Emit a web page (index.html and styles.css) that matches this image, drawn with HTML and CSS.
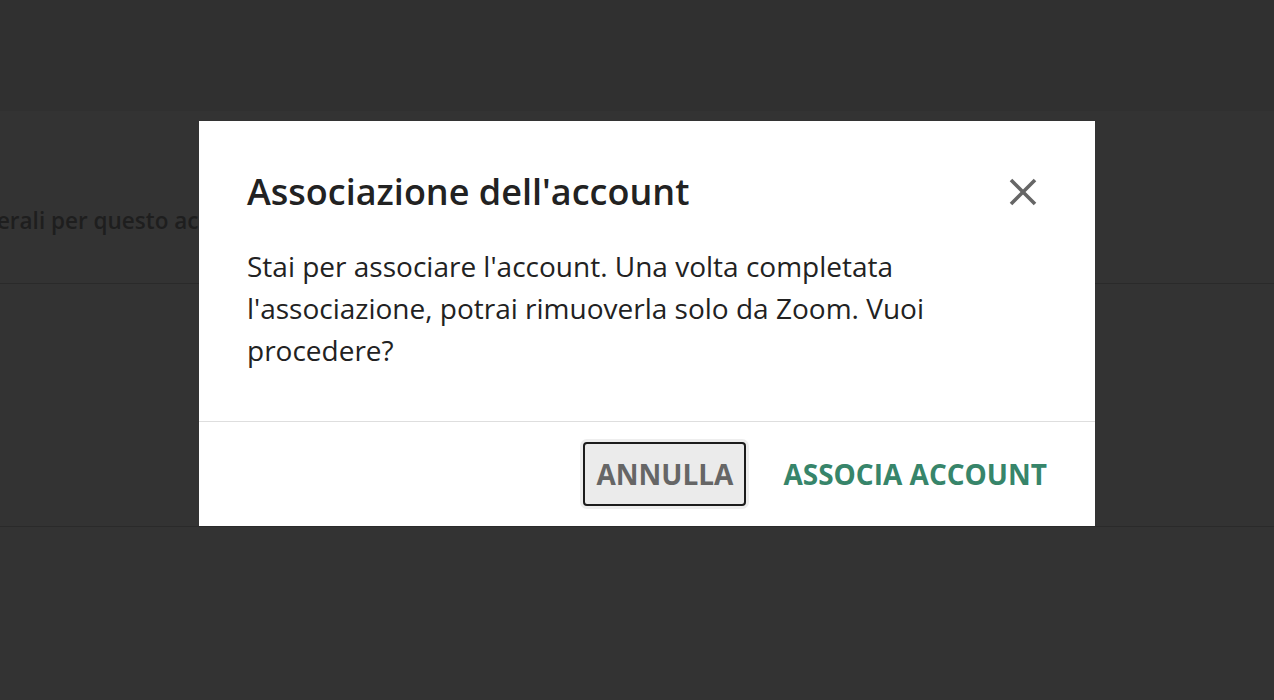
FILE: index.html
```html
<!DOCTYPE html>
<html lang="it">
<head>
<meta charset="utf-8">
<title>Associazione dell'account</title>
<link rel="stylesheet" href="styles.css">
</head>
<body>
<div class="page">
  <header class="topbar"></header>
  <section class="settings-head">
    <h2 class="settings-title">Impostazioni generali per questo account</h2>
  </section>
  <section class="settings-body"></section>
  <section class="settings-rest"></section>
</div>

<div class="overlay">
  <div class="modal" role="dialog" aria-labelledby="modal-title">
    <div class="modal-header">
      <h1 class="modal-title" id="modal-title">Associazione dell'account</h1>
      <button class="close-btn" aria-label="Chiudi">
        <svg width="28" height="28" viewBox="0 0 28 28">
          <path d="M2 2 L26 26 M26 2 L2 26" stroke="#666" stroke-width="3.6" stroke-linecap="butt" fill="none"/>
        </svg>
      </button>
    </div>
    <div class="modal-body">
      <p>Stai per associare l'account. Una volta completata l'associazione, potrai rimuoverla solo da Zoom. Vuoi procedere?</p>
    </div>
    <div class="modal-footer">
      <button class="btn btn-cancel">ANNULLA</button>
      <button class="btn btn-primary">ASSOCIA ACCOUNT</button>
    </div>
  </div>
</div>
</body>
</html>
```

FILE: styles.css
```css
* { box-sizing: border-box; }

html, body {
  margin: 0;
  padding: 0;
}

body {
  width: 1274px;
  height: 700px;
  overflow: hidden;
  background: #333333;
  font-family: "Open Sans", "Liberation Sans", sans-serif;
  position: relative;
}

.page {
  display: flex;
  flex-direction: column;
}

.topbar {
  height: 111px;
  background: #303030;
}

.settings-head {
  height: 173px;
  display: flex;
  align-items: center;
  border-bottom: 1px solid #2a2a2a;
  overflow: hidden;
}

.settings-title {
  margin: 0;
  white-space: nowrap;
  font-size: 22.5px;
  font-weight: 600;
  color: #1e1e1e;
  margin-left: -189px;
  padding-top: 46px;
}

.settings-body {
  height: 243px;
  border-bottom: 1px solid #2a2a2a;
}

.settings-rest {
  height: 172px;
}

.overlay {
  position: absolute;
  inset: 0;
}

.modal {
  position: absolute;
  left: 199px;
  top: 121px;
  width: 896px;
  background: #ffffff;
  color: #222222;
}

.modal-header {
  display: flex;
  align-items: center;
  justify-content: space-between;
  padding: 47px 48px 0 48px;
}

.modal-title {
  margin: 0;
  font-size: 36px;
  line-height: 48px;
  font-weight: 600;
  color: #222222;
}

.close-btn {
  width: 48px;
  height: 48px;
  border: 0;
  padding: 0;
  background: transparent;
  display: flex;
  align-items: center;
  justify-content: center;
}

.modal-body {
  padding: 29px 48px 50px 48px;
}

.modal-body p {
  margin: 0;
  font-size: 28px;
  line-height: 42px;
  color: #222222;
  max-width: 800px;
}

.modal-footer {
  border-top: 1px solid #dedede;
  display: flex;
  justify-content: flex-end;
  align-items: center;
  gap: 24px;
  padding: 20px 35px 20px 48px;
}

.btn {
  font-family: "Open Sans", "Liberation Sans", sans-serif;
  font-size: 28px;
  font-weight: 700;
  line-height: 38px;
  height: 64px;
  padding: 11px 11px;
  border: 2px solid transparent;
  border-radius: 4px;
  background: transparent;
}

.btn-cancel {
  color: #666666;
  background: #ebebeb;
  border-color: #1c1c1c;
  box-shadow: 0 0 0 3px #eeeeee;
}

.btn-primary {
  color: #37856a;
}
```
